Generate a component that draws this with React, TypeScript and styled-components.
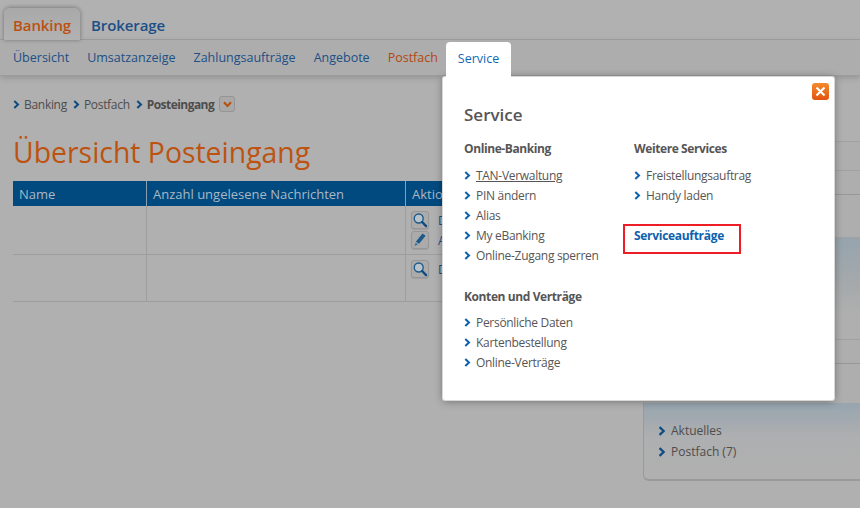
import { createGlobalStyle, styled } from 'styled-components'

const GlobalStyle = createGlobalStyle`
  html, body {
    margin: 0;
    padding: 0;
    background: #b0b0b0;
    overflow: hidden;
  }
  body {
    font-family: "Open Sans", "Noto Sans", sans-serif;
    font-size: 12px;
  }
`

const Page = styled.div`
  position: relative;
  width: 860px;
  height: 508px;
  overflow: hidden;
`

const TopBar = styled.div`
  display: flex;
  align-items: flex-end;
  height: 39px;
  padding-left: 4px;
  background: #b1b1b1;
  border-bottom: 1px solid #a0a0a0;
  box-shadow: 0 1px 3px rgba(0, 0, 0, 0.16);
`

const MainTab = styled.div<{ $active?: boolean }>`
  position: relative;
  z-index: 1;
  display: flex;
  align-items: center;
  height: 32px;
  margin-bottom: -1px;
  margin-left: ${({ $active }) => ($active ? '0' : '2px')};
  padding: 2px 9px 0;
  box-sizing: border-box;
  font-size: 15px;
  font-weight: 600;
  letter-spacing: -0.1px;
  color: ${({ $active }) => ($active ? '#bd5010' : '#1c4f86')};
  ${({ $active }) =>
    $active &&
    `
    background: linear-gradient(#a9a9a9, #b2b2b2);
    border-radius: 6px 6px 0 0;
    box-shadow: 0 -1px 4px rgba(0, 0, 0, 0.14), 1px 0 4px rgba(0, 0, 0, 0.12), -1px 0 4px rgba(0, 0, 0, 0.12);
  `}
`

const SubNav = styled.div`
  display: flex;
  height: 35px;
  padding-left: 13px;
  gap: 18px;
  background: #adadad;
  border-bottom: 1px solid #9c9c9c;
  box-shadow: 0 2px 6px rgba(0, 0, 0, 0.16);
`

const SubLink = styled.a<{ $current?: boolean }>`
  display: flex;
  align-items: center;
  font-size: 12.5px;
  color: ${({ $current }) => ($current ? '#b4470e' : '#1c4f86')};
`

const ServiceTab = styled.a`
  position: absolute;
  z-index: 3;
  left: 446px;
  top: 42px;
  width: 65px;
  height: 37px;
  padding-top: 8px;
  box-sizing: border-box;
  text-align: center;
  font-size: 12.5px;
  color: #1168b4;
  background: #fff;
  border-radius: 4px 4px 0 0;
`

const Body = styled.div`
  display: flex;
  height: 432px;
`

const Main = styled.div`
  width: 630px;
  flex: none;
  padding-left: 13px;
  box-sizing: border-box;
`

const Crumbs = styled.div`
  display: flex;
  align-items: center;
  height: 20px;
  margin-top: 18px;
  font-size: 12px;
  letter-spacing: -0.3px;
  color: #4e4c4c;
`

const Crumb = styled.span<{ $bold?: boolean }>`
  margin: 0 6px 0 4px;
  font-weight: ${({ $bold }) => ($bold ? 700 : 400)};
  letter-spacing: ${({ $bold }) => ($bold ? '-0.55px' : '-0.3px')};
`

const DropButton = styled.span`
  display: flex;
  align-items: center;
  justify-content: center;
  width: 14px;
  height: 14px;
  margin-left: -1px;
  border: 1px solid #959595;
  border-radius: 3px;
  background: #a9a9a9;
`

const Title = styled.h1`
  margin: 17px 0 8px;
  height: 42px;
  font-size: 28.4px;
  line-height: 42px;
  font-weight: 400;
  color: #bd5311;
`

const Table = styled.div`
  display: grid;
  grid-template-columns: 133px 259px 225px;
  width: 617px;
`

const HeadCell = styled.div`
  height: 25px;
  padding-left: 6px;
  line-height: 27px;
  font-size: 13px;
  color: #a9b8c4;
  background: #004a80;
  border-left: 1px solid #8aa0b2;
  box-sizing: border-box;
  white-space: nowrap;

  &:first-child {
    border-left: none;
  }
`

const Cell = styled.div`
  height: 49px;
  padding: 4px 0 0 5px;
  box-sizing: border-box;
  border-left: 1px solid #9d9d9d;
  border-bottom: 1px solid #9d9d9d;

  &:nth-child(3n + 1) {
    border-left: none;
  }

  &:nth-child(n + 7) {
    height: 47px;
  }
`

const ActionRow = styled.div`
  display: flex;
  align-items: center;
  height: 20px;
  gap: 9px;
  font-size: 12px;
  white-space: nowrap;
  color: #1c4f86;
`

const IconButton = styled.span`
  display: flex;
  flex: none;
  align-items: center;
  justify-content: center;
  width: 16px;
  height: 16px;
  border: 1px solid #979797;
  border-radius: 3px;
  background: #ababab;
  box-shadow: 0 1px 1px rgba(0, 0, 0, 0.1);
`

const Sidebar = styled.div`
  flex: 1;
  padding-top: 65px;
  margin-left: 13px;
`

const SideBlock = styled.div<{ $h: number; $dark?: boolean; $tint?: boolean }>`
  height: ${({ $h }) => $h}px;
  box-sizing: border-box;
  border-top: 1px solid ${({ $dark }) => ($dark ? '#979797' : '#a1a1a1')};
  background: ${({ $tint }) => ($tint ? 'linear-gradient(#96a4ae, #a5a9ab 45%, #afafaf 75%)' : '#aeaeae')};
`

const NewsPanel = styled.div`
  height: 78px;
  padding: 17px 0 0 14px;
  box-sizing: border-box;
  background: linear-gradient(#97a5af, #aeafb0 45%, #b0b0b0);
  border-left: 1px solid #9a9a9a;
  border-bottom: 2px solid #9a9a9a;
  border-radius: 0 0 0 6px;
`

const NewsItem = styled.div`
  display: flex;
  align-items: center;
  gap: 5px;
  height: 21px;
  font-size: 12px;
  color: #4e4c4c;
`

const Popup = styled.div`
  position: absolute;
  z-index: 2;
  left: 443px;
  top: 77px;
  width: 391px;
  height: 323px;
  padding: 28px 0 0 21px;
  box-sizing: border-box;
  background: #fff;
  border-radius: 2px;
  box-shadow: 0 0 0 1px #d8d8d8, 0 1px 8px rgba(0, 0, 0, 0.4);
  color: #575555;
`

const CloseButton = styled.span`
  position: absolute;
  top: 6px;
  right: 5px;
  display: flex;
  align-items: center;
  justify-content: center;
  width: 17px;
  height: 17px;
  border-radius: 3px;
  background: linear-gradient(#f58a2c, #e2530f);
`

const PopupTitle = styled.h2`
  margin: 0;
  height: 20px;
  font-size: 17px;
  line-height: 20px;
  font-weight: 600;
`

const Columns = styled.div`
  display: grid;
  grid-template-columns: 170px 1fr;
  margin-top: 14px;
`

const SectionTitle = styled.h3<{ $spaced?: boolean }>`
  margin: ${({ $spaced }) => ($spaced ? '22px 0 5px' : '0 0 6px')};
  height: 20px;
  font-size: 12px;
  line-height: 20px;
  font-weight: 700;
  letter-spacing: -0.4px;
`

const LinkRow = styled.div<{ $underline?: boolean }>`
  display: flex;
  align-items: center;
  gap: 5px;
  height: 20px;
  font-size: 12px;
  letter-spacing: -0.3px;
  color: #575555;

  span {
    text-decoration: ${({ $underline }) => ($underline ? 'underline' : 'none')};
  }
`

const Marked = styled.div`
  width: 118px;
  height: 30px;
  margin: 19px 0 0 -11px;
  padding-left: 9px;
  box-sizing: border-box;
  border: 2px solid #ee1c25;
  line-height: 19px;
  font-size: 12px;
  font-weight: 700;
  letter-spacing: -0.3px;
  color: #0d62ad;
`

const Chevron = ({ color = '#0d62ad', size = 7 }: { color?: string; size?: number }) => (
  <svg width={size} height={size + 2} viewBox="0 0 7 9" style={{ flex: 'none' }}>
    <path d="M1.3 1 L5 4.5 L1.3 8" fill="none" stroke={color} strokeWidth="2" />
  </svg>
)

const SearchIcon = () => (
  <svg width="16" height="16" viewBox="0 0 15 15">
    <circle cx="6.3" cy="6.1" r="4.2" fill="#b8c2c9" stroke="#1d5a8c" strokeWidth="1.3" />
    <path d="M9.5 9.4 L13.2 13.2" stroke="#0d4b80" strokeWidth="2.2" strokeLinecap="round" />
  </svg>
)

const PencilIcon = () => (
  <svg width="16" height="16" viewBox="0 0 15 15">
    <path d="M9.8 1.5 L12.8 3.6 L6.6 11 L3.6 9.2 Z" fill="#1d5a8c" />
    <path d="M3.2 10 L5.8 11.6 L2.4 13.4 Z" fill="#3d769f" />
  </svg>
)

const CloseIcon = () => (
  <svg width="11" height="11" viewBox="0 0 11 11">
    <path d="M1.5 1.5 L9.5 9.5 M9.5 1.5 L1.5 9.5" stroke="#fff" strokeWidth="2.2" />
  </svg>
)

const ChevronDown = () => (
  <svg width="9" height="7" viewBox="0 0 9 7">
    <path d="M1 1.3 L4.5 5 L8 1.3" fill="none" stroke="#b8500f" strokeWidth="2" />
  </svg>
)

const subLinks = ['Übersicht', 'Umsatzanzeige', 'Zahlungsaufträge', 'Angebote']
const onlineBanking = ['TAN-Verwaltung', 'PIN ändern', 'Alias', 'My eBanking', 'Online-Zugang sperren']
const contracts = ['Persönliche Daten', 'Kartenbestellung', 'Online-Verträge']
const moreServices = ['Freistellungsauftrag', 'Handy laden']

const App = () => (
  <Page>
    <GlobalStyle />
    <TopBar>
      <MainTab $active>Banking</MainTab>
      <MainTab>Brokerage</MainTab>
    </TopBar>
    <SubNav>
      {subLinks.map((label) => (
        <SubLink key={label}>{label}</SubLink>
      ))}
      <SubLink $current>Postfach</SubLink>
    </SubNav>
    <ServiceTab>Service</ServiceTab>
    <Body>
      <Main>
        <Crumbs>
          <Chevron color="#0d4b80" />
          <Crumb>Banking</Crumb>
          <Chevron color="#0d4b80" />
          <Crumb>Postfach</Crumb>
          <Chevron color="#0d4b80" />
          <Crumb $bold>Posteingang</Crumb>
          <DropButton>
            <ChevronDown />
          </DropButton>
        </Crumbs>
        <Title>Übersicht Posteingang</Title>
        <Table>
          <HeadCell>Name</HeadCell>
          <HeadCell>Anzahl ungelesene Nachrichten</HeadCell>
          <HeadCell>Aktionen</HeadCell>
          <Cell />
          <Cell />
          <Cell>
            <ActionRow>
              <IconButton>
                <SearchIcon />
              </IconButton>
              Details
            </ActionRow>
            <ActionRow>
              <IconButton>
                <PencilIcon />
              </IconButton>
              Alle
            </ActionRow>
          </Cell>
          <Cell />
          <Cell />
          <Cell>
            <ActionRow>
              <IconButton>
                <SearchIcon />
              </IconButton>
              Details
            </ActionRow>
          </Cell>
        </Table>
      </Main>
      <Sidebar>
        <SideBlock $h={29} />
        <SideBlock $h={24} />
        <SideBlock $h={43} $dark />
        <SideBlock $h={102} $tint />
        <SideBlock $h={24} />
        <SideBlock $h={40} $dark />
        <NewsPanel>
          <NewsItem>
            <Chevron color="#0d4b80" size={8} />
            Aktuelles
          </NewsItem>
          <NewsItem>
            <Chevron color="#0d4b80" size={8} />
            Postfach (7)
          </NewsItem>
        </NewsPanel>
      </Sidebar>
    </Body>
    <Popup>
      <CloseButton>
        <CloseIcon />
      </CloseButton>
      <PopupTitle>Service</PopupTitle>
      <Columns>
        <div>
          <SectionTitle>Online-Banking</SectionTitle>
          {onlineBanking.map((label, i) => (
            <LinkRow key={label} $underline={i === 0}>
              <Chevron />
              <span>{label}</span>
            </LinkRow>
          ))}
          <SectionTitle $spaced>Konten und Verträge</SectionTitle>
          {contracts.map((label) => (
            <LinkRow key={label}>
              <Chevron />
              <span>{label}</span>
            </LinkRow>
          ))}
        </div>
        <div>
          <SectionTitle>Weitere Services</SectionTitle>
          {moreServices.map((label) => (
            <LinkRow key={label}>
              <Chevron />
              <span>{label}</span>
            </LinkRow>
          ))}
          <Marked>Serviceaufträge</Marked>
        </div>
      </Columns>
    </Popup>
  </Page>
)

export default App
